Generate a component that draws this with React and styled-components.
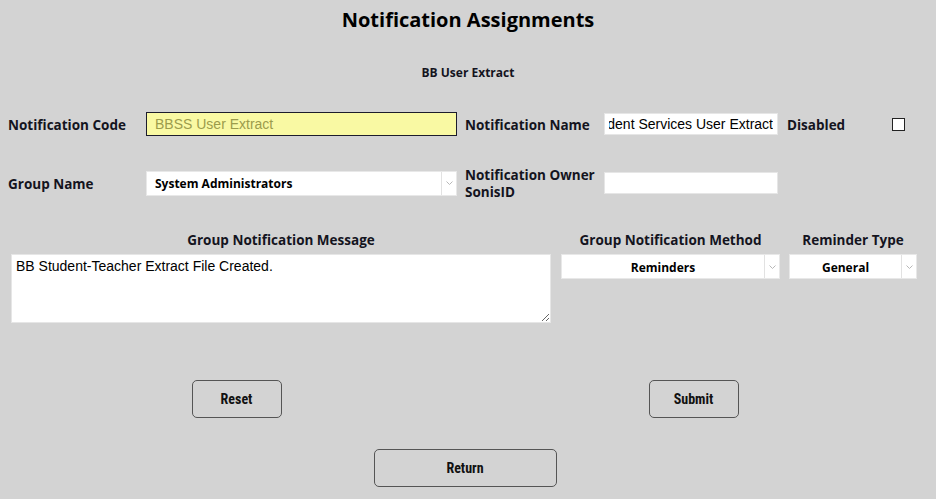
import styled, { createGlobalStyle } from 'styled-components';

const GlobalStyle = createGlobalStyle`
  body {
    margin: 0;
    background: #d3d3d3;
    font-family: "Open Sans", Lato, sans-serif;
    color: #14141e;
  }
`;

const Chevron = () => (
  <svg width='7' height='4' viewBox='0 0 7 4'>
    <path d='M0.5 0.5 L3.5 3.5 L6.5 0.5' fill='none' stroke='#b8b8b8' strokeWidth='1' />
  </svg>
);

const Select = ({ width, center, children }) => (
  <SelectBox $width={width}>
    <SelectValue $center={center}>{children}</SelectValue>
    <Arrow>
      <Chevron />
    </Arrow>
  </SelectBox>
);

const App = () => {
  return (
    <>
      <GlobalStyle />
      <Page>
        <Title>Notification Assignments</Title>
        <SubTitle>BB User Extract</SubTitle>

        <Row $height={24}>
          <Label $width={138}>Notification Code</Label>
          <CodeInput readOnly value='BBSS User Extract' />
          <Label $width={139} $left={8}>Notification Name</Label>
          <TextInput readOnly dir='rtl' value='BB Student Services User Extract' />
          <Label $width={105} $left={9}>Disabled</Label>
          <Check />
        </Row>

        <Row $height={34} $top={30}>
          <Label $width={138}>Group Name</Label>
          <Select width={311}>System Administrators</Select>
          <Label $width={139} $left={8}>
            Notification Owner
            <br />
            SonisID
          </Label>
          <TextInput readOnly value='' />
        </Row>

        <MessageRow>
          <Column $width={540}>
            <ColumnTitle>Group Notification Message</ColumnTitle>
            <MessageArea readOnly value='BB Student-Teacher Extract File Created.' />
          </Column>
          <Column $width={219}>
            <ColumnTitle>Group Notification Method</ColumnTitle>
            <Select width={219} center>Reminders</Select>
          </Column>
          <Column $width={128}>
            <ColumnTitle>Reminder Type</ColumnTitle>
            <Select width={128} center>General</Select>
          </Column>
        </MessageRow>

        <ButtonRow>
          <Button>Reset</Button>
          <Button>Submit</Button>
        </ButtonRow>
        <ReturnRow>
          <Button $wide>Return</Button>
        </ReturnRow>
      </Page>
    </>
  );
};

const Page = styled.div`
  padding: 8px 8px 0;
  width: 936px;
  box-sizing: border-box;
`;

//Header
const Title = styled.h1`
  margin: 0;
  font-size: 20px;
  line-height: 24px;
  font-weight: 700;
  text-align: center;
  color: #000;
`;

const SubTitle = styled.div`
  margin-top: 33px;
  font-size: 12px;
  line-height: 16px;
  font-weight: 700;
  text-align: center;
`;

//Rows
const Row = styled.div`
  display: flex;
  align-items: center;
  height: ${({ $height }) => $height}px;
  margin-top: ${({ $top }) => $top || 31}px;
`;

const Label = styled.div`
  flex: none;
  width: ${({ $width }) => $width}px;
  margin-left: ${({ $left }) => $left || 0}px;
  padding-top: 2px;
  font-size: 13.5px;
  line-height: 17px;
  font-weight: 700;
  white-space: nowrap;
`;

const CodeInput = styled.input`
  flex: none;
  width: 311px;
  height: 24px;
  box-sizing: border-box;
  margin: 0;
  padding: 0 8px;
  border: 1px solid #1c1c2c;
  background: #f9f9a3;
  color: #9c9c4c;
  font-family: "Liberation Sans", Arial, sans-serif;
  font-size: 14px;
  outline: none;
`;

const TextInput = styled.input`
  flex: none;
  width: 174px;
  height: 22px;
  box-sizing: border-box;
  margin: 0;
  padding: 0 4px;
  border: 1px solid #e6e6e6;
  background: #fff;
  color: #000;
  font-family: "Liberation Sans", Arial, sans-serif;
  font-size: 14px;
  outline: none;
`;

const Check = styled.span`
  width: 13px;
  height: 13px;
  box-sizing: border-box;
  border: 1px solid #222;
  background: #fff;
`;

//Select
const SelectBox = styled.div`
  flex: none;
  display: flex;
  width: ${({ $width }) => $width}px;
  height: 25px;
  background: #fff;
  border: 1px solid #e8e8e8;
  box-sizing: border-box;
`;

const SelectValue = styled.div`
  flex: 1;
  display: flex;
  align-items: center;
  justify-content: ${({ $center }) => ($center ? 'center' : 'flex-start')};
  padding-left: ${({ $center }) => ($center ? 0 : 8)}px;
  padding-top: 1px;
  font-size: 12px;
  font-weight: 700;
  color: #000;
`;

const Arrow = styled.div`
  width: 14px;
  display: flex;
  align-items: center;
  justify-content: center;
  border-left: 1px solid #e2e2e2;
`;

//Message
const MessageRow = styled.div`
  display: flex;
  align-items: flex-start;
  gap: 9px;
  margin-top: 32px;
  padding-left: 3px;
`;

const Column = styled.div`
  display: flex;
  flex-direction: column;
  width: ${({ $width }) => $width}px;
  &:nth-child(2) {
    margin-left: 1px;
  }
`;

const ColumnTitle = styled.div`
  font-size: 13.5px;
  line-height: 16px;
  font-weight: 700;
  text-align: center;
  margin-bottom: 6px;
  white-space: nowrap;
`;

const MessageArea = styled.textarea`
  width: 540px;
  height: 69px;
  box-sizing: border-box;
  margin: 0;
  padding: 3px 4px;
  border: 1px solid #e6e6e6;
  background: #fff;
  font-family: "Liberation Sans", Arial, sans-serif;
  font-size: 14px;
  color: #000;
  outline: none;
`;

//Buttons
const ButtonRow = styled.div`
  display: grid;
  grid-template-columns: 1fr 1fr;
  justify-items: center;
  margin-top: 57px;
  padding-right: 6px;
`;

const ReturnRow = styled.div`
  display: flex;
  justify-content: center;
  margin-top: 31px;
  padding-right: 6px;
`;

const Button = styled.button`
  width: ${({ $wide }) => ($wide ? 183 : 90)}px;
  height: 38px;
  background: #d3d3d3;
  border: 1px solid #555;
  border-radius: 5px;
  font-family: "Liberation Sans Narrow", "Roboto Condensed", "Liberation Sans", sans-serif;
  font-size: 14px;
  font-weight: 700;
  color: #111;
  cursor: pointer;
`;

export default App;
